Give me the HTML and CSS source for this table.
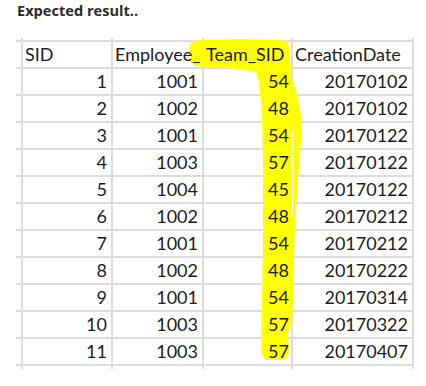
FILE: index.html
```html
<!DOCTYPE html>
<html>
<head>
<meta charset="utf-8">
<link rel="stylesheet" href="styles.css">
</head>
<body>
<div class="page">
  <div class="title">Expected result..</div>
  <div class="sheet">
    <div class="row ext"><div class="cell sp"></div><div class="cell c1"></div><div class="cell c2"></div><div class="cell c3"></div><div class="cell c4"></div></div>
    <div class="row"><div class="cell sp"></div><div class="cell c1 l"><span>SID</span></div><div class="cell c2 l"><span>Employee_</span></div><div class="cell c3 l"><span>Team_SID</span></div><div class="cell c4 l"><span>CreationDate</span></div></div>
    <div class="row"><div class="cell sp"></div><div class="cell c1"><span>1</span></div><div class="cell c2"><span>1001</span></div><div class="cell c3"><span>54</span></div><div class="cell c4"><span>20170102</span></div></div>
    <div class="row"><div class="cell sp"></div><div class="cell c1"><span>2</span></div><div class="cell c2"><span>1002</span></div><div class="cell c3"><span>48</span></div><div class="cell c4"><span>20170102</span></div></div>
    <div class="row"><div class="cell sp"></div><div class="cell c1"><span>3</span></div><div class="cell c2"><span>1001</span></div><div class="cell c3"><span>54</span></div><div class="cell c4"><span>20170122</span></div></div>
    <div class="row"><div class="cell sp"></div><div class="cell c1"><span>4</span></div><div class="cell c2"><span>1003</span></div><div class="cell c3"><span>57</span></div><div class="cell c4"><span>20170122</span></div></div>
    <div class="row"><div class="cell sp"></div><div class="cell c1"><span>5</span></div><div class="cell c2"><span>1004</span></div><div class="cell c3"><span>45</span></div><div class="cell c4"><span>20170122</span></div></div>
    <div class="row"><div class="cell sp"></div><div class="cell c1"><span>6</span></div><div class="cell c2"><span>1002</span></div><div class="cell c3"><span>48</span></div><div class="cell c4"><span>20170212</span></div></div>
    <div class="row"><div class="cell sp"></div><div class="cell c1"><span>7</span></div><div class="cell c2"><span>1001</span></div><div class="cell c3"><span>54</span></div><div class="cell c4"><span>20170212</span></div></div>
    <div class="row"><div class="cell sp"></div><div class="cell c1"><span>8</span></div><div class="cell c2"><span>1002</span></div><div class="cell c3"><span>48</span></div><div class="cell c4"><span>20170222</span></div></div>
    <div class="row"><div class="cell sp"></div><div class="cell c1"><span>9</span></div><div class="cell c2"><span>1001</span></div><div class="cell c3"><span>54</span></div><div class="cell c4"><span>20170314</span></div></div>
    <div class="row"><div class="cell sp"></div><div class="cell c1"><span>10</span></div><div class="cell c2"><span>1003</span></div><div class="cell c3"><span>57</span></div><div class="cell c4"><span>20170322</span></div></div>
    <div class="row"><div class="cell sp"></div><div class="cell c1"><span>11</span></div><div class="cell c2"><span>1003</span></div><div class="cell c3"><span>57</span></div><div class="cell c4"><span>20170407</span></div></div>
    <div class="row ext2"><div class="cell sp"></div><div class="cell c1"></div><div class="cell c2"></div><div class="cell c3"></div><div class="cell c4"></div></div>
  </div>
  <svg class="marker" width="426" height="386" viewBox="0 0 426 386">
    <path d="M191 42 L200 40 L240 39 L280 40 L288 42 L290 55 L291 75 L297 95 L301 115 L301 140 L298 180 L295 220 L294 260 L293 300 L292 322 L288 333 L289 352 L285 360 L266 360 L261 354 L262 300 L263 250 L263 160 L262 112 L259 82 L256 72 L240 69 L210 67 L195 66 L190 62 L189 50 Z" fill="#ffff00"/>
    <path d="M292.5 130 L292.5 215" stroke="#ffffff" stroke-width="1.2" fill="none"/>
  </svg>
</div>
</body>
</html>
```
FILE: styles.css
```css
html, body {
  margin: 0;
  padding: 0;
  background: #ffffff;
}

.page {
  position: relative;
  width: 426px;
  height: 386px;
  overflow: hidden;
  background: #ffffff;
}

.title {
  height: 38px;
  box-sizing: border-box;
  padding: 0 0 0 17px;
  font-family: "Open Sans", "Noto Sans", sans-serif;
  font-weight: 700;
  font-size: 14.6px;
  color: #2b2b2b;
}

.sheet {
  margin-left: 16px;
  display: flex;
  flex-direction: column;
  font-family: Lato, "Liberation Sans", sans-serif;
  font-size: 18px;
  color: #1c1c1c;
}

.row {
  display: flex;
  height: 27px;
}

.row.ext {
  height: 4px;
}

.row.ext2 {
  height: 3px;
}

.cell {
  box-sizing: border-box;
  height: 100%;
  border-right: 2px solid #dcdcdc;
  border-bottom: 2px solid #dcdcdc;
  display: flex;
  align-items: flex-end;
  justify-content: flex-end;
  padding: 0 4px 2px 4px;
  white-space: nowrap;
  overflow: visible;
}

.cell span {
  position: relative;
  z-index: 2;
}

.row.ext2 .cell {
  border-bottom: none;
}

.cell.sp {
  width: 7px;
  padding: 0;
}

.cell.c1 { width: 90px; }
.cell.c2 { width: 91px; }
.cell.c3 { width: 89px; padding-right: 2px; }
.cell.c4 { width: 121px; }

.cell.l {
  justify-content: flex-start;
  padding-left: 2px;
}

.marker {
  position: absolute;
  left: 0;
  top: 0;
  z-index: 1;
}
```
